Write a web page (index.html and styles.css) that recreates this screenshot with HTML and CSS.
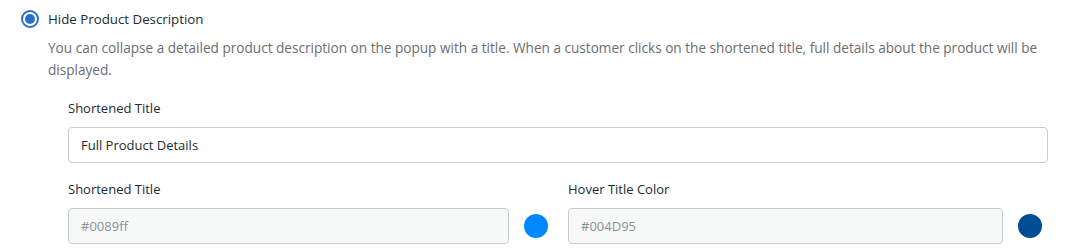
FILE: index.html
```html
<!DOCTYPE html>
<html lang="en">
<head>
    <meta charset="UTF-8">
    <title>Hide Product Description</title>
    <link rel="stylesheet" href="styles.css">
</head>
<body>
    <div class="option">
        <label class="radio">
            <input type="radio" name="desc" checked>
            <span class="radio-mark"></span>
            <span class="radio-text">Hide Product Description</span>
        </label>
        <p class="help">You can collapse a detailed product description on the popup with a title. When a customer clicks on the shortened title, full details about the product will be displayed.</p>

        <div class="fields">
            <div class="field">
                <label class="field-label">Shortened Title</label>
                <input type="text" class="text-input" value="Full Product Details">
            </div>
            <div class="color-grid">
                <div class="field">
                    <label class="field-label">Shortened Title</label>
                    <div class="color-row">
                        <input type="text" class="text-input muted" value="#0089ff">
                        <span class="swatch" style="background:#0089ff"></span>
                    </div>
                </div>
                <div class="field field-last">
                    <label class="field-label">Hover Title Color</label>
                    <div class="color-row">
                        <input type="text" class="text-input muted" value="#004D95">
                        <span class="swatch" style="background:#004D95"></span>
                    </div>
                </div>
            </div>
        </div>
    </div>
</body>
</html>
```

FILE: styles.css
```css
:root { --text: #212b36; --muted: #6b6e72; --border: #c9cccf; --primary: #2c6ecb; }
body { margin: 0; font-family: 'Open Sans', 'Noto Sans', sans-serif; color: var(--text); background: #fff; }
.option { padding: 10px 21px 0 21px; }
.radio { display: flex; align-items: center; gap: 9px; height: 18px; cursor: pointer; }
.radio input { display: none; }
.radio-mark { width: 18px; height: 18px; border-radius: 50%; border: 2px solid var(--primary); box-sizing: border-box; display: flex; align-items: center; justify-content: center; }
.radio-mark::after { content: ''; width: 10px; height: 10px; border-radius: 50%; background: var(--primary); }
.radio-text { font-size: 13.3px; }
.help { margin: 9px 0 0 27px; font-size: 13.6px; line-height: 22px; color: var(--muted); }
.fields { margin: 18px 0 0 47px; width: 980px; }
.field-label { display: block; font-size: 13px; line-height: 18px; margin-bottom: 10px; }
.text-input { width: 100%; height: 36px; box-sizing: border-box; border: 1px solid var(--border); border-radius: 4px; padding: 0 12px; font: inherit; font-size: 13px; color: var(--text); background: #fff; outline: none; }
.text-input.muted { background: #f7f8f8; color: #8c9196; }
.color-grid { display: grid; grid-template-columns: 1fr 1fr; gap: 20px; margin-top: 17px; }
.field-last { padding-right: 6px; }
.color-row { display: flex; align-items: center; gap: 15px; }
.color-row .text-input { flex: 1; }
.swatch { width: 24px; height: 24px; border-radius: 50%; flex: none; }
```
